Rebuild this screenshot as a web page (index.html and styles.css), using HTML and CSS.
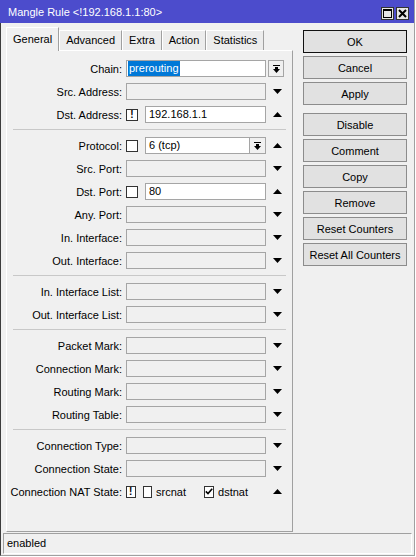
FILE: index.html
```html
<!DOCTYPE html>
<html lang="en">

<head>
    <meta charset="UTF-8">
    <title>Mangle Rule</title>
    <link rel="stylesheet" href="styles.css">
</head>

<body>
    <div class="window">
        <div class="titlebar">
            <span class="title">Mangle Rule &lt;!192.168.1.1:80&gt;</span>
            <div class="title-btns">
                <span class="tbtn">
                    <svg width="9" height="9" viewBox="0 0 9 9">
                        <rect x="0.5" y="0.5" width="8" height="8" fill="none" stroke="#000" />
                        <rect x="0" y="0" width="9" height="2" fill="#000" />
                    </svg>
                </span>
                <span class="tbtn">
                    <svg width="9" height="9" viewBox="0 0 9 9">
                        <path d="M1 1L8 8M8 1L1 8" stroke="#000" stroke-width="2" />
                    </svg>
                </span>
            </div>
        </div>

        <div class="main">
            <div class="left">
                <div class="tabs">
                    <div class="tab active">General</div>
                    <div class="tab">Advanced</div>
                    <div class="tab">Extra</div>
                    <div class="tab">Action</div>
                    <div class="tab">Statistics</div>
                </div>

                <div class="panel">
                    <!-- chain / addresses -->
                    <div class="row">
                        <label>Chain:</label>
                        <div class="field"><div class="input on chain"><span class="selected">prerouting</span></div></div>
                        <div class="extra"><span class="combo combo-side"><svg width="7" height="8" viewBox="0 0 7 8"><rect width="7" height="1" /><rect x="2" y="2" width="3" height="2" /><path d="M0 4H7L3.5 8Z" /></svg></span></div>
                    </div>
                    <div class="row">
                        <label>Src. Address:</label>
                        <div class="field"><div class="input"></div></div>
                        <div class="extra"><svg class="arrow" width="9" height="5" viewBox="0 0 9 5"><path d="M0 0H9L4.5 5Z" /></svg></div>
                    </div>
                    <div class="row">
                        <label>Dst. Address:</label>
                        <div class="field"><span class="neg">!</span><div class="input on">192.168.1.1</div></div>
                        <div class="extra"><svg class="arrow" width="9" height="5" viewBox="0 0 9 5"><path d="M0 5H9L4.5 0Z" /></svg></div>
                    </div>

                    <div class="sep"></div>

                    <!-- protocol / ports / interfaces -->
                    <div class="row">
                        <label>Protocol:</label>
                        <div class="field"><span class="check"></span><div class="input on">6 (tcp)</div><span class="combo"><svg width="7" height="8" viewBox="0 0 7 8"><rect width="7" height="1" /><rect x="2" y="2" width="3" height="2" /><path d="M0 4H7L3.5 8Z" /></svg></span></div>
                        <div class="extra"><svg class="arrow" width="9" height="5" viewBox="0 0 9 5"><path d="M0 5H9L4.5 0Z" /></svg></div>
                    </div>
                    <div class="row">
                        <label>Src. Port:</label>
                        <div class="field"><div class="input"></div></div>
                        <div class="extra"><svg class="arrow" width="9" height="5" viewBox="0 0 9 5"><path d="M0 0H9L4.5 5Z" /></svg></div>
                    </div>
                    <div class="row">
                        <label>Dst. Port:</label>
                        <div class="field"><span class="check"></span><div class="input on">80</div></div>
                        <div class="extra"><svg class="arrow" width="9" height="5" viewBox="0 0 9 5"><path d="M0 5H9L4.5 0Z" /></svg></div>
                    </div>
                    <div class="row">
                        <label>Any. Port:</label>
                        <div class="field"><div class="input"></div></div>
                        <div class="extra"><svg class="arrow" width="9" height="5" viewBox="0 0 9 5"><path d="M0 0H9L4.5 5Z" /></svg></div>
                    </div>
                    <div class="row">
                        <label>In. Interface:</label>
                        <div class="field"><div class="input"></div></div>
                        <div class="extra"><svg class="arrow" width="9" height="5" viewBox="0 0 9 5"><path d="M0 0H9L4.5 5Z" /></svg></div>
                    </div>
                    <div class="row">
                        <label>Out. Interface:</label>
                        <div class="field"><div class="input"></div></div>
                        <div class="extra"><svg class="arrow" width="9" height="5" viewBox="0 0 9 5"><path d="M0 0H9L4.5 5Z" /></svg></div>
                    </div>

                    <div class="sep"></div>

                    <div class="row">
                        <label>In. Interface List:</label>
                        <div class="field"><div class="input"></div></div>
                        <div class="extra"><svg class="arrow" width="9" height="5" viewBox="0 0 9 5"><path d="M0 0H9L4.5 5Z" /></svg></div>
                    </div>
                    <div class="row">
                        <label>Out. Interface List:</label>
                        <div class="field"><div class="input"></div></div>
                        <div class="extra"><svg class="arrow" width="9" height="5" viewBox="0 0 9 5"><path d="M0 0H9L4.5 5Z" /></svg></div>
                    </div>

                    <div class="sep"></div>

                    <!-- marks -->
                    <div class="row">
                        <label>Packet Mark:</label>
                        <div class="field"><div class="input"></div></div>
                        <div class="extra"><svg class="arrow" width="9" height="5" viewBox="0 0 9 5"><path d="M0 0H9L4.5 5Z" /></svg></div>
                    </div>
                    <div class="row">
                        <label>Connection Mark:</label>
                        <div class="field"><div class="input"></div></div>
                        <div class="extra"><svg class="arrow" width="9" height="5" viewBox="0 0 9 5"><path d="M0 0H9L4.5 5Z" /></svg></div>
                    </div>
                    <div class="row">
                        <label>Routing Mark:</label>
                        <div class="field"><div class="input"></div></div>
                        <div class="extra"><svg class="arrow" width="9" height="5" viewBox="0 0 9 5"><path d="M0 0H9L4.5 5Z" /></svg></div>
                    </div>
                    <div class="row">
                        <label>Routing Table:</label>
                        <div class="field"><div class="input"></div></div>
                        <div class="extra"><svg class="arrow" width="9" height="5" viewBox="0 0 9 5"><path d="M0 0H9L4.5 5Z" /></svg></div>
                    </div>

                    <div class="sep"></div>

                    <!-- connection -->
                    <div class="row">
                        <label>Connection Type:</label>
                        <div class="field"><div class="input"></div></div>
                        <div class="extra"><svg class="arrow" width="9" height="5" viewBox="0 0 9 5"><path d="M0 0H9L4.5 5Z" /></svg></div>
                    </div>
                    <div class="row">
                        <label>Connection State:</label>
                        <div class="field"><div class="input"></div></div>
                        <div class="extra"><svg class="arrow" width="9" height="5" viewBox="0 0 9 5"><path d="M0 0H9L4.5 5Z" /></svg></div>
                    </div>
                    <div class="row">
                        <label>Connection NAT State:</label>
                        <div class="field">
                            <span class="neg">!</span>
                            <span class="check"></span><span class="opt">srcnat</span>
                            <span class="check checked"><svg width="8" height="7" viewBox="0 0 8 7"><path d="M0.8 3.4L3 5.6L7.2 0.8" fill="none" stroke="#000" stroke-width="1.6" /></svg></span><span class="opt">dstnat</span>
                        </div>
                        <div class="extra"><svg class="arrow" width="9" height="5" viewBox="0 0 9 5"><path d="M0 5H9L4.5 0Z" /></svg></div>
                    </div>
                </div>
            </div>

            <div class="buttons">
                <button class="default">OK</button>
                <button>Cancel</button>
                <button>Apply</button>
                <button class="gap">Disable</button>
                <button>Comment</button>
                <button>Copy</button>
                <button>Remove</button>
                <button>Reset Counters</button>
                <button>Reset All Counters</button>
            </div>
        </div>

        <div class="status">enabled</div>
    </div>
</body>

</html>
```

FILE: styles.css
```css
html {
    background-color: #fff;
}

body {
    margin: 0;
    font-family: "Liberation Sans", Arial, sans-serif;
    font-size: 11px;
    color: #000;
}

.window {
    display: flex;
    flex-direction: column;
    box-sizing: border-box;
    width: 415px;
    height: 556px;
    background-color: #f0f0f0;
    border-left: 1px solid #3c3c3c;
    border-right: 1px solid #a0a0a0;
    border-bottom: 1px solid #a0a0a0;
}

.titlebar {
    display: flex;
    justify-content: space-between;
    align-items: center;
    height: 23px;
    margin-left: -1px;
    padding: 0 5px 0 8px;
    background-color: #4c4ccc;
    color: white;
}

.title {
    font-size: 11px;
}

.title-btns {
    display: flex;
    gap: 2px;
    margin-top: 4px;
}

.tbtn {
    display: flex;
    align-items: center;
    justify-content: center;
    box-sizing: border-box;
    width: 13px;
    height: 13px;
    background-color: #e6e6e6;
    border: 1px solid #333;
}

.main {
    display: flex;
    padding-left: 5px;
}

.left {
    width: 287px;
    padding-top: 4px;
}

/* tabs */
.tabs {
    display: flex;
    align-items: flex-end;
    height: 23px;
}

.tab {
    box-sizing: border-box;
    height: 20px;
    padding: 0 6px;
    line-height: 19px;
    background-color: #ececec;
    border-top: 1px solid #fff;
    border-left: 1px solid #fff;
    border-right: 1px solid #a0a0a0;
}

.tab.active {
    position: relative;
    z-index: 1;
    height: 24px;
    margin-bottom: -1px;
    line-height: 22px;
    background-color: #f0f0f0;
}

.panel {
    box-sizing: border-box;
    height: 482px;
    padding-top: 6px;
    border-top: 1px solid #fff;
    border-left: 1px solid #fff;
    border-right: 1px solid #a0a0a0;
    border-bottom: 1px solid #a0a0a0;
}

.row {
    display: grid;
    grid-template-columns: 119px 140px 24px;
    align-items: center;
    height: 23px;
}

.row label {
    padding-right: 4px;
    text-align: right;
    white-space: nowrap;
}

.field {
    display: flex;
    align-items: center;
    height: 17px;
}

.input {
    flex: 1;
    box-sizing: border-box;
    height: 17px;
    padding-left: 3px;
    line-height: 15px;
    border: 1px solid #a5a5a5;
    background-color: #f0f0f0;
}

.input.on {
    background-color: #fff;
}

.input.chain {
    padding-left: 1px;
}

.selected {
    display: inline-block;
    padding: 0 1px;
    background-color: #0078d7;
    color: #fff;
}

.combo {
    display: flex;
    align-items: center;
    justify-content: center;
    box-sizing: border-box;
    width: 17px;
    height: 17px;
    margin-left: -1px;
    border: 1px solid #a5a5a5;
    background-color: #f0f0f0;
}

.combo-side {
    width: 16px;
    margin-left: 2px;
}

.extra {
    display: flex;
    align-items: center;
}

.arrow {
    margin-left: 7px;
}

.neg,
.check {
    display: flex;
    align-items: center;
    justify-content: center;
    box-sizing: border-box;
    width: 12px;
    height: 12px;
    margin-right: 7px;
    border: 1px solid #333;
    background-color: #fff;
}

.neg {
    font-weight: bold;
    font-size: 10px;
}

.opt {
    margin-left: -3px;
    margin-right: 18px;
}

.sep {
    height: 0;
    margin: 3px 6px 4px;
    border-top: 1px solid #c8c8c8;
}

/* right side buttons */
.buttons {
    display: flex;
    flex-direction: column;
    gap: 3px;
    width: 104px;
    margin-left: 10px;
    padding-top: 7px;
}

button {
    box-sizing: border-box;
    height: 23px;
    padding: 0;
    font-family: "Liberation Sans", Arial, sans-serif;
    font-size: 11px;
    color: #000;
    background-color: #e1e1e1;
    border: 1px solid #8c8c8c;
}

button.default {
    border-color: #111;
}

button.gap {
    margin-top: 5px;
}

.status {
    box-sizing: border-box;
    height: 21px;
    margin: 1px 2px 0 2px;
    padding-left: 3px;
    line-height: 19px;
    border-top: 1px solid #a0a0a0;
    border-left: 1px solid #a0a0a0;
    border-right: 1px solid #fff;
    border-bottom: 1px solid #fff;
}
```
